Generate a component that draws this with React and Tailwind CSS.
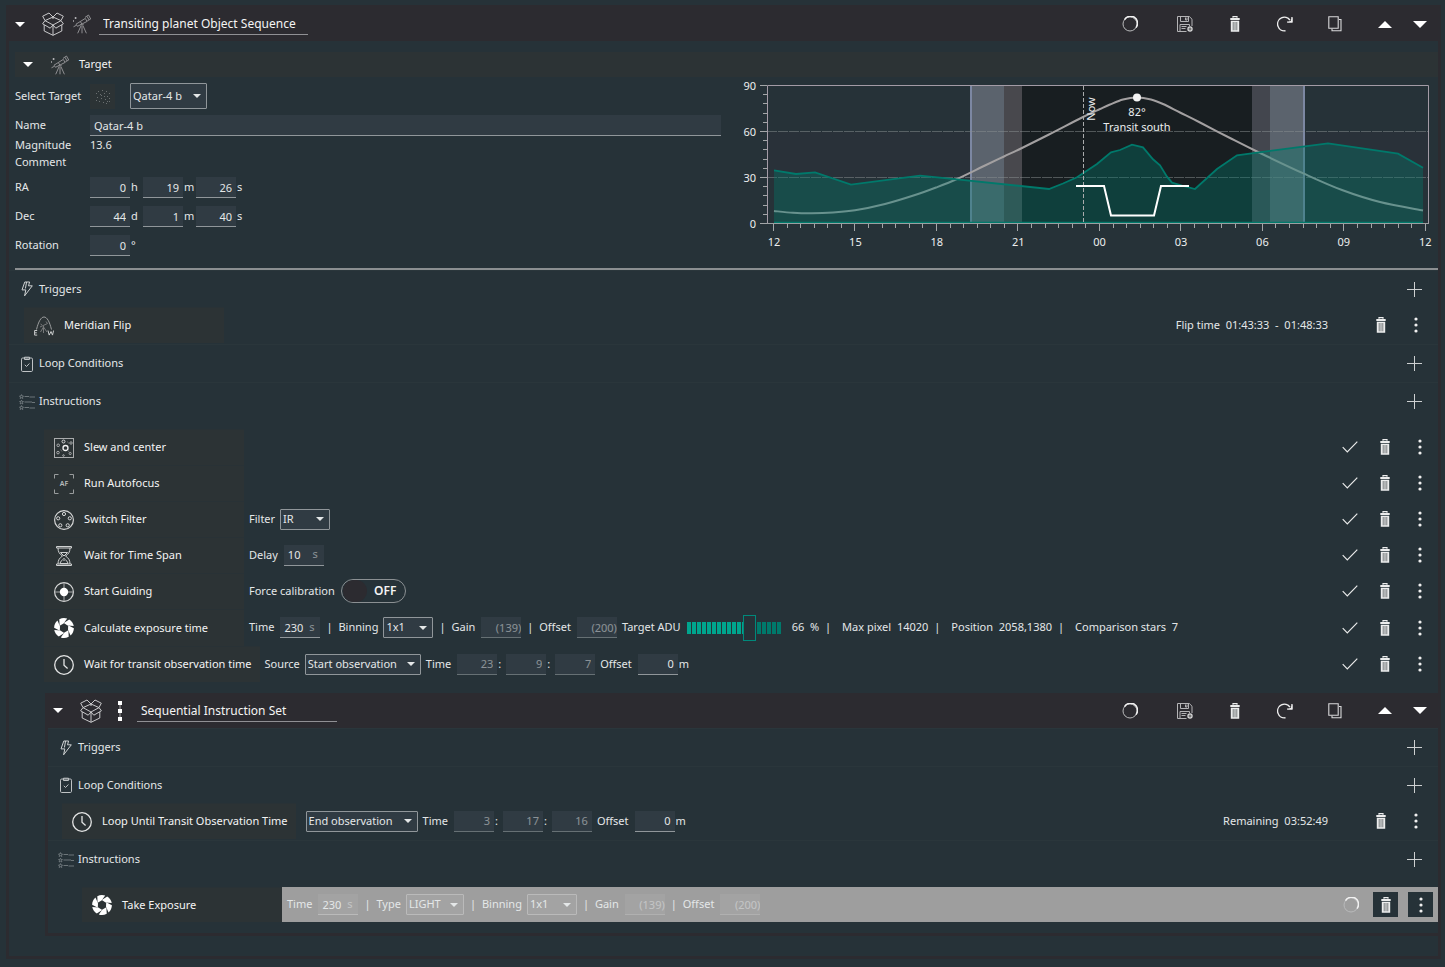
import React, { useId } from "react";

/* ---------- icons ---------- */

function Caret({ up = false, className = "w-[14px] h-[7px]" }) {
  return (
    <svg viewBox="0 0 14 7" className={className} aria-hidden="true">
      <path d={up ? "M0 7 7 0l7 7z" : "M0 0h14L7 7z"} fill="currentColor" />
    </svg>
  );
}

function BoxIcon() {
  return (
    <svg viewBox="0 0 22 24" className="h-6 w-[22px]" fill="none" stroke="#c9c9cb" strokeWidth="1" strokeLinejoin="round" aria-hidden="true">
      <path d="M11 5 7 1 .7 4.2 3 8.6zM11 5l4-4 6.300 3.200L19 8.600z" />
      <path d="M3 8.600.6 11.800 8.200 16.200 11 13zM19 8.600l2.400 3.200-7.600 4.400L11 13z" />
      <path d="M2.200 13v6L11 23.300 19.800 19v-6M11 13v10.300M11 5v2" />
    </svg>
  );
}

function TelescopeIcon() {
  return (
    <svg viewBox="0 0 20 20" className="h-5 w-5" fill="none" stroke="#8f8f92" strokeWidth="1" aria-hidden="true">
      <path d="M4 10.200 13.300 4.400l1.800 3L5.500 12.300zM13 3.400 16.500 1l2.200 4-3.400 1.900M1.500 12.800l3-1.600M8.500 7.800l1.400 2.300M15 2.300l2 3.600" />
      <path d="M10 11.500v7.800M9 11.800l-3.300 7.500M11 11.800l3.400 7.500M8.300 10.800h3.400" />
      <path d="M3.600 3v2M2.600 4h2M1.500 6.300v1.400" stroke="#b5b5b8" />
    </svg>
  );
}

function BoltIcon() {
  return (
    <svg viewBox="0 0 12 16" className="h-4 w-3" fill="none" stroke="#cfd2d3" strokeWidth="1" strokeLinejoin="round" aria-hidden="true">
      <path d="M3.800 1h4.800L7.500 4.800h3.800L3.600 14.800l1.200-5.900H1z" />
      <path d="M5.600 1 4.400 7.500" />
    </svg>
  );
}

function ClipboardIcon() {
  return (
    <svg viewBox="0 0 12 16" className="h-4 w-3" fill="none" stroke="#bfc3c5" strokeWidth="1" aria-hidden="true">
      <rect x=".5" y="2" width="11" height="13.500" rx="1.200" />
      <path d="M3.500 1.200h5v2.300h-5zM3.800 8.800l1.700 1.700 2.900-3" />
    </svg>
  );
}

function ListIcon() {
  return (
    <svg viewBox="0 0 16 16" className="h-4 w-4" fill="none" stroke="#747d81" strokeWidth=".9" aria-hidden="true">
      <path d="M2.500.6 3.100 2l1.400.1-1 1 .3 1.400-1.300-.8-1.300.8.300-1.400-1-1L1.900 2zM2.500 6.100l.6 1.400 1.400.1-1 1 .3 1.400-1.300-.8-1.300.8.300-1.400-1-1 1.400-.1zM2.500 11.600l.6 1.400 1.400.1-1 1 .3 1.400-1.300-.8-1.300.8.300-1.400-1-1 1.400-.1z" />
      <path d="M5.500 2.500H10M10.500 3H16M5.500 8H13M13 8.500h3M5.500 13.500H10M10.500 14H16" />
    </svg>
  );
}

function MeridianIcon() {
  return (
    <svg viewBox="0 0 20 20" className="h-5 w-5" fill="none" stroke="#9a9c9d" strokeWidth="1" aria-hidden="true">
      <path d="M2.500 13.500C4.500 5.500 7 1 10 1s5.500 4.500 7.500 12.500" />
      <path d="M6 11l7.500-3.500M9.500 10v7M9.500 11l-3 5M9.500 11l3.500 5M6.500 8l1.500 1M12 5.500l1.500 2" stroke="#77797a" />
      <path d="M3.200 14.500H.6v4.600h2.600M.6 16.800h2.200M14 14.500l1.200 4.600L17 15.500l1.500 3.600 1.100-4.600" stroke="#c9cbcb" />
    </svg>
  );
}

function SlewIcon() {
  return (
    <svg viewBox="0 0 20 20" className="h-5 w-5" fill="none" stroke="#a9abac" strokeWidth="1" aria-hidden="true">
      <rect x=".5" y=".5" width="19" height="19" />
      <circle cx="11.500" cy="10" r="2.500" stroke="#f2f2f2" strokeWidth="1.300" />
      <circle cx="9.500" cy="3.500" r="1.500" stroke="#d8d8d8" />
      <circle cx="4.200" cy="7.300" r="1.300" />
      <circle cx="17" cy="5" r="1.200" />
      <circle cx="4" cy="14.600" r="1.300" />
      <circle cx="9.500" cy="17.500" r=".8" />
      <circle cx="16.200" cy="15.500" r="1.100" />
      <path d="M13.500 3.500l1 2M6.500 11.500l1.500 2M14 12.500l1 1.500" stroke="#6c6f70" />
    </svg>
  );
}

function AutofocusIcon() {
  return (
    <span className="relative grid h-5 w-5 place-items-center">
      <svg viewBox="0 0 20 20" className="absolute inset-0 h-5 w-5" fill="none" stroke="#999c9d" strokeWidth="1" aria-hidden="true">
        <path d="M.5 4.500v-4h4M15.500.5h4v4M19.500 15.500v4h-4M4.500 19.500h-4v-4" />
      </svg>
      <span className="text-[7px] leading-none font-semibold text-[#b9bbbc]">AF</span>
    </span>
  );
}

function FilterWheelIcon() {
  return (
    <svg viewBox="0 0 20 20" className="h-5 w-5" fill="none" stroke="#d5d6d6" strokeWidth="1" aria-hidden="true">
      <circle cx="10" cy="10" r="9.400" strokeWidth="1.200" />
      <circle cx="10" cy="4" r="1.600" />
      <circle cx="4.200" cy="8.300" r="1.600" />
      <circle cx="15.800" cy="8.300" r="1.600" />
      <circle cx="6.300" cy="15.300" r="1.600" />
      <circle cx="13.700" cy="15.300" r="1.600" />
    </svg>
  );
}

function HourglassIcon() {
  return (
    <svg viewBox="0 0 20 20" className="h-5 w-5" fill="none" stroke="#cfd1d1" strokeWidth="1" aria-hidden="true">
      <path d="M2.500.5h15v1.500h-15zM2.500 18h15v1.500h-15z" />
      <path d="M4 2c0 4 1.500 6 4.500 8-3 2-4.500 4-4.500 8M16 2c0 4-1.500 6-4.500 8 3 2 4.500 4 4.500 8" />
      <path d="M6.500 6.500h7L10 10zM6 17.500c.5-2 2-3.500 4-5 2 1.500 3.500 3 4 5zM10 14v1" />
    </svg>
  );
}

function GuidingIcon() {
  return (
    <svg viewBox="0 0 20 20" className="h-5 w-5" fill="none" stroke="#d9dada" strokeWidth="1.200" aria-hidden="true">
      <circle cx="10" cy="10" r="9.400" />
      <path d="M10 .5v19M.5 10h19" strokeWidth="1" stroke="#a9abac" />
      <circle cx="10" cy="10" r="4.200" fill="#fff" stroke="none" />
    </svg>
  );
}

function ApertureIcon() {
  const blades = [0, 60, 120, 180, 240, 300];
  return (
    <svg viewBox="0 0 20 20" className="h-5 w-5" aria-hidden="true">
      {blades.map((a) => (
        <path key={a} d="M5.300 1.300A10 10 0 0 1 13.200.6L9.600 5.600 5.600 7.700z" fill="#fff" transform={`rotate(${a} 10 10)`} />
      ))}
    </svg>
  );
}

function ClockIcon() {
  return (
    <svg viewBox="0 0 20 20" className="h-5 w-5" fill="none" stroke="#e4e5e5" strokeWidth="1.300" aria-hidden="true">
      <circle cx="10" cy="10" r="9.300" />
      <path d="M10 4v6.300l3.600 3.200" />
    </svg>
  );
}

function SequentialIcon() {
  return (
    <svg viewBox="0 0 6 20" className="h-5 w-[6px]" fill="#fff" aria-hidden="true">
      <path d="M1 0h4v4H1zM1 8h4v4H1zM1 16h4v4H1z" />
      <path d="M2.500 4h1v4h-1zM2.500 12h1v4h-1z" fill="#aaa" />
    </svg>
  );
}

function SpinnerIcon() {
  return (
    <svg viewBox="0 0 16 16" className="h-4 w-4" fill="none" aria-hidden="true">
      <circle cx="8" cy="8" r="7" stroke="#b9babb" strokeWidth="1" />
      <path d="M2.500 3.700A7 7 0 1 1 14 11.600" stroke="#f2f2f2" strokeWidth="1.500" />
    </svg>
  );
}

function SaveIcon() {
  return (
    <svg viewBox="0 0 16 16" className="h-4 w-4" fill="none" stroke="#b4b4b6" strokeWidth="1" aria-hidden="true">
      <path d="M9.500 15.500H.5V.5h11.800l2.700 2.700V10M3.500.5v5h8v-5M8.500 1.500v2.500h1.500V1.500M3 15V8.500h9.500V10M4.500 10.500h5M4.500 12.500h4" />
      <circle cx="13" cy="13" r="2.700" fill="#d8d8d9" stroke="none" />
      <path d="M13 11.500v3M11.500 13h3" stroke="#555" />
    </svg>
  );
}

function TrashIcon() {
  return (
    <svg viewBox="0 0 10 16" className="h-4 w-[10px]" aria-hidden="true">
      <path d="M3 1.800V.6h4v1.200" fill="none" stroke="#eceded" strokeWidth="1.200" />
      <path d="M.3 1.900h9.400v2H.3zM.8 4.700h8.400v11H.8z" fill="#eceded" />
      <path d="M3.200 6v8.300M5 6v8.300M6.800 6v8.300" stroke="#5a5f62" strokeWidth=".8" />
    </svg>
  );
}

function RedoIcon() {
  return (
    <svg viewBox="0 0 16 16" className="h-4 w-4" fill="none" aria-hidden="true">
      <path d="M8.500 14.800A6.800 6.800 0 1 1 13 4.200" stroke="#efefef" strokeWidth="1.400" />
      <path d="M15.500 1v5.500H9.800l3.800-1.400z" fill="#efefef" />
      <path d="M14.900 1v5H10" stroke="#efefef" strokeWidth="1.200" />
    </svg>
  );
}

function CopyIcon() {
  return (
    <svg viewBox="0 0 14 16" className="h-4 w-[14px]" fill="none" stroke="#d9d9da" strokeWidth="1.100" aria-hidden="true">
      <path d="M.8.8h9.400v11.400H.8z" />
      <path d="M11 3.500h2v11.300H4v-2" />
    </svg>
  );
}

function CheckIcon() {
  return (
    <svg viewBox="0 0 16 12" className="h-3 w-4" fill="none" stroke="#e9eaea" strokeWidth="1.200" aria-hidden="true">
      <path d="M.7 6.200l4.600 4.600L15.300.7" />
    </svg>
  );
}

function DotsIcon() {
  return (
    <svg viewBox="0 0 4 16" className="h-4 w-1" fill="#f0f0f0" aria-hidden="true">
      <circle cx="2" cy="2" r="1.600" />
      <circle cx="2" cy="8" r="1.600" />
      <circle cx="2" cy="14" r="1.600" />
    </svg>
  );
}

function PlusIcon() {
  return (
    <svg viewBox="0 0 15 15" className="h-[15px] w-[15px]" stroke="#cdd0d1" strokeWidth="1" aria-hidden="true">
      <path d="M7.500 0v15M0 7.500h15" />
    </svg>
  );
}

function StarsIcon() {
  const dots = [[4, 3], [8, 2], [12, 3], [15, 5], [2, 5], [6, 6], [10, 5], [13, 8], [3, 9], [7, 10], [11, 11], [15, 10], [5, 13], [9, 14], [13, 13], [2, 12], [7, 7], [10, 8], [15, 13], [12, 15]];
  return (
    <svg viewBox="0 0 17 17" className="h-[17px] w-[17px]" fill="#6a6f70" aria-hidden="true">
      {dots.map(([x, y], i) => (
        <rect key={i} x={x} y={y} width="1" height="1" />
      ))}
    </svg>
  );
}

/* ---------- controls ---------- */

function IconButton({ label, className = "", children }) {
  return (
    <button type="button" aria-label={label} className={`grid h-[25px] w-[25px] shrink-0 place-items-center text-white ${className}`}>
      {children}
    </button>
  );
}

function Field({ label, hideLabel = false, value, unit, muted = false, suffix, align = "text-right pr-1", tail = "" }) {
  const id = useId();
  return (
    <span className="flex items-center gap-[6px]">
      {!hideLabel && <label htmlFor={id}>{label}</label>}
      <span className={`flex items-center ${tail}`}>
        <span className={`flex h-[21px] w-10 items-center border-b bg-(--fill) ${muted ? "border-(--line-muted)" : "border-(--line)"}`}>
          <input
            id={id}
            aria-label={hideLabel ? label : undefined}
            defaultValue={value}
            className={`h-full w-full min-w-0 bg-transparent outline-none ${align} ${muted ? "opacity-50" : ""}`}
          />
          {unit && <span className="pr-[6px] opacity-50">{unit}</span>}
        </span>
        {suffix && <span className="pl-px">{suffix}</span>}
      </span>
    </span>
  );
}

function Select({ label, hideLabel = false, value, width, height = "h-[21px]" }) {
  const id = useId();
  return (
    <span className="flex items-center gap-[5px]">
      {!hideLabel && <label htmlFor={id}>{label}</label>}
      <span className={`relative flex items-center rounded-[1px] border border-(--line) bg-(--fill) ${height} ${width}`}>
        <select id={id} aria-label={hideLabel ? label : undefined} defaultValue={value} className="h-full w-full appearance-none bg-transparent pl-[2px] outline-none">
          <option>{value}</option>
        </select>
        <Caret className="pointer-events-none absolute right-[5px] h-[4px] w-[8px]" />
      </span>
    </span>
  );
}

function Bar({ className = "" }) {
  return <span className={`w-[8px] text-center ${className}`}>|</span>;
}

function Toggle() {
  return (
    <label className="flex items-center gap-[6px]">
      Force calibration
      <span className="flex h-6 w-[65px] items-center rounded-full border border-[#8b9093] px-px">
        <input type="checkbox" className="h-[22px] w-6 appearance-none rounded-full bg-[#2c2b30]" />
        <span className="flex-1 text-center text-[12px] font-semibold text-[#f4f4f4]">OFF</span>
      </span>
    </label>
  );
}

function AduSlider() {
  const id = useId();
  return (
    <span className="flex items-center gap-[6px]">
      <label htmlFor={id}>Target ADU</label>
      <input
        id={id}
        type="range"
        min="0"
        max="100"
        defaultValue="66"
        className="h-[26px] w-[99px] appearance-none bg-transparent [&::-webkit-slider-runnable-track]:h-3 [&::-webkit-slider-runnable-track]:[background:repeating-linear-gradient(90deg,transparent_0_4px,#263238_4px_5px)_0_0/95px_12px_no-repeat,linear-gradient(90deg,#00a58e_60px,#00796b_60px)_0_0/95px_12px_no-repeat] [&::-webkit-slider-thumb]:-mt-[7px] [&::-webkit-slider-thumb]:h-[26px] [&::-webkit-slider-thumb]:w-[13px] [&::-webkit-slider-thumb]:appearance-none [&::-webkit-slider-thumb]:border [&::-webkit-slider-thumb]:border-[#00897b] [&::-webkit-slider-thumb]:bg-[#263238]"
      />
      <span>66&nbsp; %</span>
    </span>
  );
}

/* ---------- layout pieces ---------- */

function SetHeader({ children, className = "" }) {
  return (
    <header className={`flex items-center bg-[#2c2b30] pr-[6px] ${className}`}>
      {children}
      <div className="ml-auto flex items-center gap-[25px]">
        <span className="mr-[5px] grid w-[25px] place-items-center"><SpinnerIcon /></span>
        <IconButton label="Save as template"><SaveIcon /></IconButton>
        <IconButton label="Delete"><TrashIcon /></IconButton>
        <IconButton label="Reset"><RedoIcon /></IconButton>
        <IconButton label="Duplicate"><CopyIcon /></IconButton>
        <span className="flex gap-[10px]">
          <IconButton label="Move up"><Caret up /></IconButton>
          <IconButton label="Move down"><Caret /></IconButton>
        </span>
      </div>
    </header>
  );
}

function Section({ icon, title, height = "h-[38px]" }) {
  return (
    <div className={`flex items-center border-t border-[#2a363b] pr-[11px] pl-[10px] ${height}`}>
      <span className="grid w-4 place-items-center">{icon}</span>
      <h3 className="ml-1 flex-1">{title}</h3>
      <IconButton label={`Add to ${title}`}><PlusIcon /></IconButton>
    </div>
  );
}

function ItemLabel({ icon, children }) {
  return (
    <div className="flex h-full min-w-[200px] shrink-0 items-center gap-[10px] border-t border-[#293236] bg-[#2c3335] pr-2 pl-[10px] text-[#f4f4f4]">
      <span className="grid w-5 place-items-center">{icon}</span>
      <span>{children}</span>
    </div>
  );
}

function Step({ icon, title, children, height = "h-9" }) {
  return (
    <li className={`flex items-center pr-[6px] ${height}`}>
      <ItemLabel icon={icon}>{title}</ItemLabel>
      <div className="flex items-center gap-[5px] pl-[5px]">{children}</div>
      <div className="ml-auto flex gap-[10px]">
        <span className="grid h-[25px] w-[25px] place-items-center"><CheckIcon /></span>
        <IconButton label="Delete"><TrashIcon /></IconButton>
        <IconButton label="More"><DotsIcon /></IconButton>
      </div>
    </li>
  );
}

function Condition({ icon, title, children, status }) {
  return (
    <div className="mb-px flex h-9 items-center pr-[10px]">
      <ItemLabel icon={icon}>{title}</ItemLabel>
      <div className="flex items-center gap-[5px] pl-[10px]">{children}</div>
      <span className="mr-10 ml-auto">{status}</span>
      <div className="flex gap-[10px]">
        <IconButton label="Delete"><TrashIcon /></IconButton>
        <IconButton label="More"><DotsIcon /></IconButton>
      </div>
    </div>
  );
}

/* ---------- altitude chart ---------- */

const ALTITUDE = [[774, 211], [793, 212.8], [812, 213.3], [833, 212.5], [855, 210.3], [885, 204], [915, 195], [936, 187.5], [957, 179], [985, 165.5], [1004, 156.5], [1022, 148], [1049, 134.5], [1083, 117], [1100, 109], [1110, 104.5], [1123, 99.5], [1137, 97.5], [1151, 99.5], [1163, 104], [1180, 112.5], [1200, 122.5], [1230, 138], [1258, 152], [1304, 173.7], [1342, 190], [1380, 202], [1423, 210.5]];
const HORIZON = "774,170.3 796,174 815,172.3 851,184.7 920,175.7 957,179.3 1049,189 1063,183.5 1077,177.3 1097,164 1111,152.3 1120,150 1132,144.7 1143,147.3 1153,159.3 1160,165.3 1167,176.7 1172,182.7 1182,185.7 1195,189 1217,169 1237,155.3 1328,143.3 1398,153.7 1423,167.7";

function smooth(points) {
  let d = `M${points[0][0]} ${points[0][1]}`;
  for (let i = 0; i < points.length - 1; i++) {
    const p0 = points[i - 1] || points[i];
    const p1 = points[i];
    const p2 = points[i + 1];
    const p3 = points[i + 2] || p2;
    d += `C${p1[0] + (p2[0] - p0[0]) / 6} ${p1[1] + (p2[1] - p0[1]) / 6} ${p2[0] - (p3[0] - p1[0]) / 6} ${p2[1] - (p3[1] - p1[1]) / 6} ${p2[0]} ${p2[1]}`;
  }
  return d;
}

function AltitudeChart() {
  const hours = ["12", "15", "18", "21", "00", "03", "06", "09", "12"];
  const minorX = Array.from({ length: 49 }, (_, i) => i);
  const minorY = Array.from({ length: 16 }, (_, i) => i);
  return (
    <svg viewBox="740 77 698 179" className="h-[179px] w-[698px] shrink-0" role="img" aria-label="Target altitude">
      <g>
        <rect x="767" y="132" width="662" height="46" fill="#293139" />
        <rect x="970" y="86" width="34" height="137" fill="#5b636d" />
        <rect x="970" y="86" width="2" height="137" fill="#7c87a2" />
        <rect x="1004" y="86" width="18" height="137" fill="#48484d" />
        <rect x="1022" y="86" width="230" height="137" fill="#181e21" />
        <rect x="1252" y="86" width="18" height="137" fill="#43464e" />
        <rect x="1270" y="86" width="34" height="137" fill="#5b636d" />
        <rect x="1303" y="86" width="2" height="137" fill="#7c87a2" />
      </g>
      <path d="M767 131.500H1428M767 177.500H1428" stroke="#8a8f92" strokeOpacity=".5" strokeDasharray="10 1" />
      <path d={smooth(ALTITUDE)} fill="none" stroke="#a3a0a1" strokeWidth="2" />
      <polygon points={`${HORIZON} 1423,223 774,223`} fill="#00796b" fillOpacity=".36" />
      <polyline points={HORIZON} fill="none" stroke="#00796b" strokeWidth="1.800" />
      <path d="M774 222.500H1423" stroke="#00796b" strokeWidth="1.500" />
      <path d="M767.500 223.500V85.500H1428.500V223.500" fill="none" stroke="#a39ba6" />
      <path d="M760 223.500H1429" stroke="#9b9fa1" />
      <g stroke="#a3a6a8">
        {minorY.map((i) => (
          <path key={i} d={`M${i % 5 === 0 ? 760 : 763} ${Math.round(223 - i * 9.2) + 0.5}H767`} />
        ))}
        {minorX.map((i) => (
          <path key={i} d={`M${Math.round(773 + i * 13.58) + 0.5} 224V${i % 6 === 0 ? 231 : 228}`} />
        ))}
      </g>
      <path d="M1083.500 86V223" stroke="#a9abac" strokeDasharray="4 2" />
      <polyline points="1076,186 1104,186 1111,215.500 1154,215.500 1161,186 1189,186" fill="none" stroke="#fff" strokeWidth="2" />
      <circle cx="1137" cy="97.500" r="4" fill="#f4f4f4" />
      <g fill="#eceeee" textAnchor="middle" fontSize="11">
        {hours.map((h, i) => (
          <text key={i} x={774 + i * 81.4} y="246">{h}</text>
        ))}
        <text x="1137" y="116">82°</text>
        <text x="1137" y="131">Transit south</text>
        <text transform="translate(1095 109) rotate(-90)">Now</text>
      </g>
      <g fill="#eceeee" textAnchor="end" fontSize="11">
        <text x="756" y="90">90</text>
        <text x="756" y="136">60</text>
        <text x="756" y="182">30</text>
        <text x="756" y="228">0</text>
      </g>
    </svg>
  );
}

/* ---------- target form ---------- */

function Coordinate({ title, parts }) {
  return (
    <div className="mb-2 flex h-[21px] items-center last:mb-0">
      <span className="w-[75px]">{title}</span>
      <span className="flex">
        {parts.map(([value, unit]) => (
          <Field key={unit} label={`${title} ${unit}`} hideLabel value={value} suffix={unit} tail="w-[53px]" />
        ))}
      </span>
    </div>
  );
}

function TargetForm() {
  return (
    <div className="flex-1 pt-[6px]">
      <div className="flex h-[26px] items-center">
        <span className="w-[75px]">Select Target</span>
        <IconButton label="Load target" className="mr-[15px] bg-[#2c3335]"><StarsIcon /></IconButton>
        <Select label="Select Target" hideLabel value="Qatar-4 b" width="w-[77px]" height="h-[26px]" />
      </div>
      <div className="mt-[6px] flex h-[21px] items-center">
        <label htmlFor="target-name" className="w-[75px]">Name</label>
        <input id="target-name" defaultValue="Qatar-4 b" className="h-full flex-1 border-b border-[#90969a] bg-[#303b43] px-1 outline-none" />
      </div>
      <dl className="grid grid-cols-[75px_1fr] leading-[17px]">
        <dt>Magnitude</dt>
        <dd>13.6</dd>
        <dt>Comment</dt>
        <dd />
      </dl>
      <div className="mt-[7px]">
        <Coordinate title="RA" parts={[["0", "h"], ["19", "m"], ["26", "s"]]} />
        <Coordinate title="Dec" parts={[["44", "d"], ["1", "m"], ["40", "s"]]} />
        <Coordinate title="Rotation" parts={[["0", "°"]]} />
      </div>
    </div>
  );
}

/* ---------- page ---------- */

export default function App() {
  return (
    <main className="min-h-screen bg-[#263238] pt-[5px] pr-1 pl-[6px] font-['Noto_Sans','Open_Sans',sans-serif] text-[11px] whitespace-nowrap text-[#e4e7e8] [--fill:#303b43] [--line-muted:#667074] [--line:#90969a]">
      <section className="border-[3px] border-[#2c2b30] pb-5">
        <SetHeader className="h-[33px] pb-px pl-[6px]">
          <IconButton label="Collapse sequence" className="-ml-2"><Caret className="h-[5px] w-[10px]" /></IconButton>
          <span className="ml-[10px]"><BoxIcon /></span>
          <span className="ml-2"><TelescopeIcon /></span>
          <input aria-label="Sequence name" defaultValue="Transiting planet Object Sequence" className="ml-[7px] h-[22px] w-[209px] border-b border-[#909094] bg-transparent px-1 text-[12px] text-[#f4f4f4] outline-none" />
        </SetHeader>

        <section className="mt-[11px] ml-[6px]">
          <h2 className="flex h-[25px] items-center bg-[#2c3335]">
            <IconButton label="Collapse target"><Caret className="h-[5px] w-[10px]" /></IconButton>
            <span className="ml-[10px]"><TelescopeIcon /></span>
            <span className="ml-[9px] text-[#f4f4f4]">Target</span>
          </h2>
          <div className="flex gap-[19px] border-b-2 border-[#8b8f91] pb-3">
            <TargetForm />
            <AltitudeChart />
          </div>
        </section>

        <Section icon={<BoltIcon />} title="Triggers" height="h-[37px]" />
        <div className="pl-[15px]">
          <Condition icon={<MeridianIcon />} title="Meridian Flip" status="Flip time&nbsp; 01:43:33&nbsp; -&nbsp; 01:48:33" />
        </div>
        <Section icon={<ClipboardIcon />} title="Loop Conditions" />
        <Section icon={<ListIcon />} title="Instructions" />

        <ul className="mt-[9px] pl-[35px]">
          <Step icon={<SlewIcon />} title="Slew and center" />
          <Step icon={<AutofocusIcon />} title="Run Autofocus" />
          <Step icon={<FilterWheelIcon />} title="Switch Filter">
            <Select label="Filter" value="IR" width="w-[50px]" />
          </Step>
          <Step icon={<HourglassIcon />} title="Wait for Time Span">
            <Field label="Delay" value="10" unit="s" align="pl-1" />
          </Step>
          <Step icon={<GuidingIcon />} title="Start Guiding">
            <Toggle />
          </Step>
          <Step icon={<ApertureIcon />} title="Calculate exposure time" height="h-[37px]">
            <Field label="Time" value="230" unit="s" align="pl-1" />
            <Bar />
            <Select label="Binning" value="1x1" width="w-[50px]" />
            <Bar />
            <Field label="Gain" value="(139)" muted align="text-right" />
            <Bar />
            <Field label="Offset" value="(200)" muted align="text-right" />
            <AduSlider />
            <Bar className="mr-[5px]" />
            <span>Max pixel&nbsp; 14020</span>
            <Bar className="mr-[5px]" />
            <span>Position&nbsp; 2058,1380</span>
            <Bar className="mr-[5px]" />
            <span>Comparison stars&nbsp; 7</span>
          </Step>
          <Step icon={<ClockIcon />} title="Wait for transit observation time">
            <Select label="Source" value="Start observation" width="w-[116px]" />
            <Field label="Time" value="23" muted suffix=":" />
            <Field label="Minutes" hideLabel value="9" muted suffix=":" />
            <Field label="Seconds" hideLabel value="7" muted />
            <Field label="Offset" value="0" suffix="m" />
          </Step>
        </ul>

        <section className="mt-[11px] ml-9 border-b-[3px] border-l-[3px] border-[#2c2b30] pb-[11px]">
          <SetHeader className="h-[35px]">
            <IconButton label="Collapse instruction set" className="-ml-[3px]"><Caret className="h-[5px] w-[10px]" /></IconButton>
            <span className="ml-[10px]"><BoxIcon /></span>
            <span className="ml-[15px]"><SequentialIcon /></span>
            <input aria-label="Instruction set name" defaultValue="Sequential Instruction Set" className="ml-[14px] h-[22px] w-[200px] border-b border-[#909094] bg-transparent px-1 text-[12px] text-[#f4f4f4] outline-none" />
          </SetHeader>
          <Section icon={<BoltIcon />} title="Triggers" />
          <Section icon={<ClipboardIcon />} title="Loop Conditions" height="h-[37px]" />
          <div className="pl-[14px]">
            <Condition icon={<ClockIcon />} title="Loop Until Transit Observation Time" status="Remaining&nbsp; 03:52:49">
              <Select label="Observation event" hideLabel value="End observation" width="w-[112px]" />
              <Field label="Time" value="3" muted suffix=":" />
              <Field label="Minutes" hideLabel value="17" muted suffix=":" />
              <Field label="Seconds" hideLabel value="16" muted />
              <Field label="Offset" value="0" suffix="m" />
            </Condition>
          </div>
          <Section icon={<ListIcon />} title="Instructions" />
          <div className="mt-[9px] flex h-[35px] items-center pl-[34px]">
            <ItemLabel icon={<ApertureIcon />}>Take Exposure</ItemLabel>
            <div className="flex h-full flex-1 items-center gap-[5px] bg-[#9e9e9e] pr-[5px] pl-[5px] [--fill:#a3a3a3] [--line-muted:#b0b0b0] [--line:#bababa]">
              <Field label="Time" value="230" unit="s" align="pl-1" />
              <Bar />
              <Select label="Type" value="LIGHT" width="w-[58px]" />
              <Bar />
              <Select label="Binning" value="1x1" width="w-[50px]" />
              <Bar />
              <Field label="Gain" value="(139)" muted align="text-right" />
              <Bar />
              <Field label="Offset" value="(200)" muted align="text-right" />
              <div className="ml-auto flex gap-[10px]">
                <span className="grid h-[25px] w-[25px] place-items-center"><SpinnerIcon /></span>
                <IconButton label="Delete" className="bg-[#263238]"><TrashIcon /></IconButton>
                <IconButton label="More" className="bg-[#263238]"><DotsIcon /></IconButton>
              </div>
            </div>
          </div>
        </section>
      </section>
    </main>
  );
}
